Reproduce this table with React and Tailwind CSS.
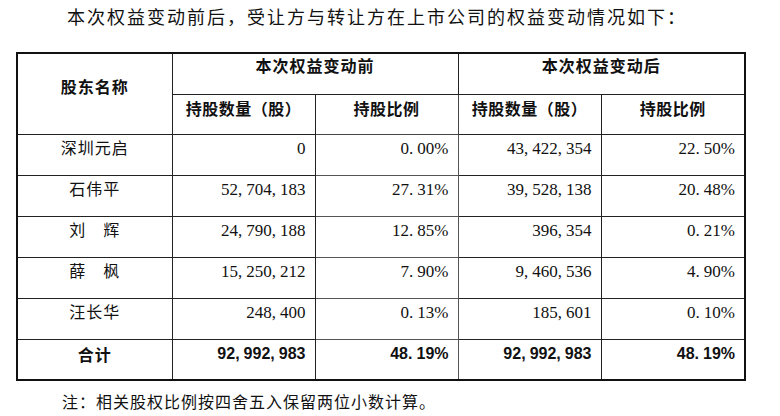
import React from 'react';

const rows = [
  { name: '深圳元启', a: '0', b: '0.00%', c: '43,422,354', d: '22.50%' },
  { name: '石伟平', a: '52,704,183', b: '27.31%', c: '39,528,138', d: '20.48%' },
  { name: '刘\u3000辉', a: '24,790,188', b: '12.85%', c: '396,354', d: '0.21%' },
  { name: '薛\u3000枫', a: '15,250,212', b: '7.90%', c: '9,460,536', d: '4.90%' },
  { name: '汪长华', a: '248,400', b: '0.13%', c: '185,601', d: '0.10%' },
];

const total = { name: '合计', a: '92,992,983', b: '48.19%', c: '92,992,983', d: '48.19%' };

// SimSun-style half-width punctuation: give , and . the room of a digit
function Num({ v }) {
  return (
    <>
      {v.split('').map((ch, i) =>
        ch === ',' || ch === '.' ? (
          <span key={i} className="mr-[4px]">{ch}</span>
        ) : (
          <span key={i}>{ch}</span>
        )
      )}
    </>
  );
}

const serif = "font-['Liberation_Serif','Noto_Sans_CJK_SC',serif]";
const hei = "font-['Noto_Sans_CJK_SC',sans-serif] font-bold";
const numBold = "font-['Liberation_Sans','Noto_Sans_CJK_SC',sans-serif] font-bold";

export default function App() {
  return (
    <div className="w-[780px] h-[416px] bg-white text-[#111] overflow-hidden">
      <p className={`pt-[6px] pl-[67px] text-[18px] leading-[24px] tracking-[2px] ${serif}`}>
        本次权益变动前后，受让方与转让方在上市公司的权益变动情况如下：
      </p>

      <table className="mt-[22px] ml-[16px] border-collapse border-2 border-[#111] table-fixed w-[728px]">
        <colgroup>
          <col className="w-[155px]" />
          <col className="w-[143px]" />
          <col className="w-[143px]" />
          <col className="w-[143px]" />
          <col className="w-[144px]" />
        </colgroup>
        <thead>
          <tr className="h-[41px]">
            <th rowSpan={2} className={`border border-[#222] align-top pt-[21px] text-[16px] leading-[22px] tracking-[1px] ${hei}`}>
              股东名称
            </th>
            <th colSpan={2} className={`border border-[#222] align-top pt-0 text-[16px] leading-[22px] tracking-[1px] ${hei}`}>
              本次权益变动前
            </th>
            <th colSpan={2} className={`border border-[#222] align-top pt-0 text-[16px] leading-[22px] tracking-[1px] ${hei}`}>
              本次权益变动后
            </th>
          </tr>
          <tr className="h-[40px]">
            <th className={`border border-[#222] align-top pt-[2px] text-[16px] leading-[22px] tracking-[0.5px] ${hei}`}>持股数量（股）</th>
            <th className={`border border-[#444] align-top pt-[2px] text-[16px] leading-[22px] tracking-[0.5px] ${hei}`}>持股比例</th>
            <th className={`border border-[#222] align-top pt-[2px] text-[16px] leading-[22px] tracking-[0.5px] ${hei}`}>持股数量（股）</th>
            <th className={`border border-[#222] align-top pt-[2px] text-[16px] leading-[22px] tracking-[0.5px] ${hei}`}>持股比例</th>
          </tr>
        </thead>
        <tbody>
          {rows.map((r) => (
            <tr key={r.name} className={`h-[41px] text-[17px] leading-[22px] ${serif}`}>
              <td className="border border-[#222] align-top pt-[3px] text-center text-[16px] tracking-[1px]">{r.name}</td>
              <td className="border border-[#222] align-top pt-[3px] pr-[9px] text-right"><Num v={r.a} /></td>
              <td className="border border-[#555] align-top pt-[3px] pr-[9px] text-right"><Num v={r.b} /></td>
              <td className="border border-[#222] align-top pt-[3px] pr-[9px] text-right"><Num v={r.c} /></td>
              <td className="border border-[#222] align-top pt-[3px] pr-[9px] text-right"><Num v={r.d} /></td>
            </tr>
          ))}
          <tr className="h-[41px] text-[16px] leading-[22px]">
            <td className={`border border-[#222] align-top pt-[3px] text-center tracking-[1px] ${hei}`}>{total.name}</td>
            <td className={`border border-[#222] align-top pt-[3px] pr-[9px] text-right ${numBold}`}><Num v={total.a} /></td>
            <td className={`border border-[#555] align-top pt-[3px] pr-[9px] text-right ${numBold}`}><Num v={total.b} /></td>
            <td className={`border border-[#222] align-top pt-[3px] pr-[9px] text-right ${numBold}`}><Num v={total.c} /></td>
            <td className={`border border-[#222] align-top pt-[3px] pr-[9px] text-right ${numBold}`}><Num v={total.d} /></td>
          </tr>
        </tbody>
      </table>

      <p className={`mt-[11px] pl-[62px] text-[16px] leading-[22px] tracking-[1px] ${serif}`}>
        注：相关股权比例按四舍五入保留两位小数计算。
      </p>
    </div>
  );
}
